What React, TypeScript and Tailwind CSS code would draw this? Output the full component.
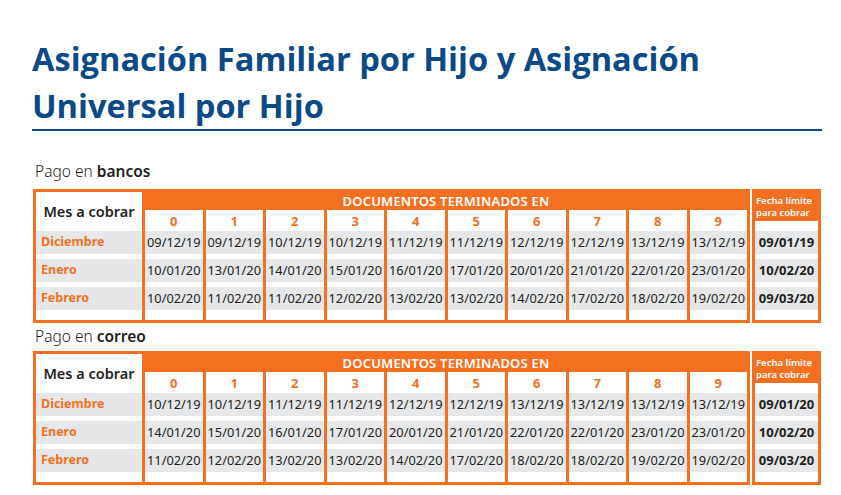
import React from "react";

type Row = { mes: string; fechas: string[]; limite: string };

const bancos: Row[] = [
  {
    mes: "Diciembre",
    fechas: ["09/12/19", "09/12/19", "10/12/19", "10/12/19", "11/12/19", "11/12/19", "12/12/19", "12/12/19", "13/12/19", "13/12/19"],
    limite: "09/01/19",
  },
  {
    mes: "Enero",
    fechas: ["10/01/20", "13/01/20", "14/01/20", "15/01/20", "16/01/20", "17/01/20", "20/01/20", "21/01/20", "22/01/20", "23/01/20"],
    limite: "10/02/20",
  },
  {
    mes: "Febrero",
    fechas: ["10/02/20", "11/02/20", "11/02/20", "12/02/20", "13/02/20", "13/02/20", "14/02/20", "17/02/20", "18/02/20", "19/02/20"],
    limite: "09/03/20",
  },
];

const correo: Row[] = [
  {
    mes: "Diciembre",
    fechas: ["10/12/19", "10/12/19", "11/12/19", "11/12/19", "12/12/19", "12/12/19", "13/12/19", "13/12/19", "13/12/19", "13/12/19"],
    limite: "09/01/20",
  },
  {
    mes: "Enero",
    fechas: ["14/01/20", "15/01/20", "16/01/20", "17/01/20", "20/01/20", "21/01/20", "22/01/20", "22/01/20", "23/01/20", "23/01/20"],
    limite: "10/02/20",
  },
  {
    mes: "Febrero",
    fechas: ["11/02/20", "12/02/20", "13/02/20", "13/02/20", "14/02/20", "17/02/20", "18/02/20", "18/02/20", "19/02/20", "19/02/20"],
    limite: "09/03/20",
  },
];

function Rows({ items, kind }: { items: string[]; kind: "mes" | "fecha" | "limite" }) {
  return (
    <div className="flex flex-col gap-[5px]">
      {items.map((t, i) => (
        <div
          key={i}
          className={
            kind === "mes"
              ? "h-[23px] bg-[#e6e7e8] flex items-center pl-[5px] text-[12.5px] font-bold text-[#f37021]"
              : kind === "fecha"
              ? "h-[23px] bg-[#e6e7e8] flex items-center justify-center text-[12.8px] text-[#231f20] whitespace-nowrap"
              : "h-[23px] bg-[#e6e7e8] flex items-center justify-center text-[13px] font-bold text-[#231f20] whitespace-nowrap"
          }
        >
          {t}
        </div>
      ))}
    </div>
  );
}

function Tabla({ rows }: { rows: Row[] }) {
  const digits = ["0", "1", "2", "3", "4", "5", "6", "7", "8", "9"];
  return (
    <div className="flex items-stretch">
      <div className="w-[717px] border-[3px] border-[#f37021] bg-[#f37021] flex gap-[3px]">
        <div className="w-[106px] bg-white flex flex-col pb-[10px]">
          <div className="h-[39px] flex items-center justify-center text-[14.5px] font-semibold text-[#231f20]">
            Mes a cobrar
          </div>
          <Rows items={rows.map((r) => r.mes)} kind="mes" />
        </div>
        <div className="flex-1 flex flex-col">
          <div className="h-[18px] flex items-center justify-center text-[13px] leading-[16px] font-semibold text-white tracking-[0.2px]">
            DOCUMENTOS TERMINADOS EN
          </div>
          <div className="grid grid-cols-10 gap-[3px] flex-1">
            {digits.map((d, ci) => (
              <div key={d} className="bg-white flex flex-col pb-[10px]">
                <div className="h-[21px] flex items-center justify-center pt-[2px] text-[13px] font-bold text-[#f37021]">
                  {d}
                </div>
                <Rows items={rows.map((r) => r.fechas[ci])} kind="fecha" />
              </div>
            ))}
          </div>
        </div>
      </div>
      <div className="ml-[2px] w-[69px] border-[3px] border-[#f37021] bg-[#f37021] flex flex-col">
        <div className="h-[29px] flex flex-col justify-center pl-[1px] pt-[1px] text-[9.5px] leading-[12px] font-semibold text-white whitespace-nowrap">
          <span className="block h-[12px]">Fecha límite</span>
          <span className="block h-[12px]">para cobrar</span>
        </div>
        <div className="flex-1 bg-white pt-[10px] pb-[10px]">
          <Rows items={rows.map((r) => r.limite)} kind="limite" />
        </div>
      </div>
    </div>
  );
}

export default function App() {
  return (
    <div
      className="w-[841px] h-[495px] bg-white overflow-hidden"
      style={{ fontFamily: '"Noto Sans", "Liberation Sans", sans-serif' }}
    >
      <div className="pl-[32px] pr-[19px] pt-[35px]">
        <h1
          className="text-[32.6px] leading-[47px] font-bold text-[#0b4a87] whitespace-nowrap"
          style={{ fontFamily: '"Open Sans", "Noto Sans", sans-serif' }}
        >
          Asignación Familiar por Hijo y Asignación
          <br />
          Universal por Hijo
        </h1>
        <div className="h-[2px] bg-[#0b4a87]" />
      </div>
      <div className="pl-[33px]">
        <div className="mt-[30px] mb-[8px] h-[20px] leading-[20px] text-[15.5px] text-[#231f20] pl-[2px]">
          <span className="font-light">Pago en </span>
          <span className="font-semibold">bancos</span>
        </div>
        <Tabla rows={bancos} />
        <div className="mt-[3px] mb-[5px] h-[20px] leading-[20px] text-[15.5px] text-[#231f20] pl-[2px]">
          <span className="font-light">Pago en </span>
          <span className="font-semibold">correo</span>
        </div>
        <Tabla rows={correo} />
      </div>
    </div>
  );
}
